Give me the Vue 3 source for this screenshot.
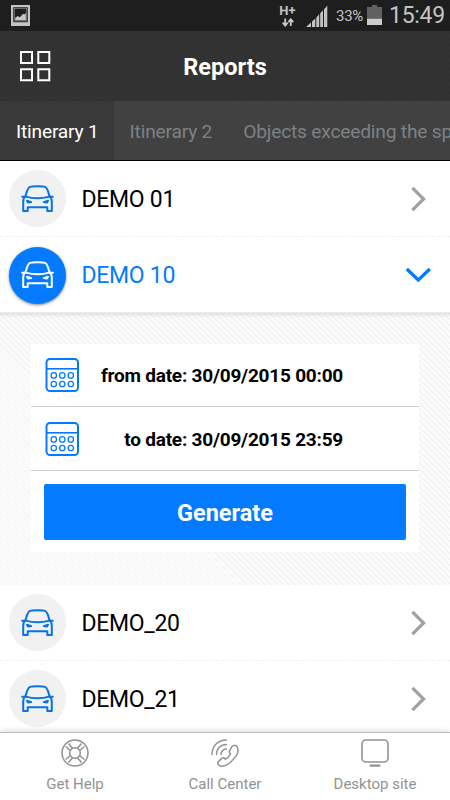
<script setup>
import { ref } from 'vue'

const tabs = ['Itinerary 1', 'Itinerary 2', 'Objects exceeding the speed']
const activeTab = ref(0)
const objects = ref([
  { name: 'DEMO 01', open: false },
  { name: 'DEMO 10', open: true },
  { name: 'DEMO_20', open: false },
  { name: 'DEMO_21', open: false },
])
const dates = [
  { label: 'from date:', value: '30/09/2015 00:00' },
  { label: 'to date:', value: '30/09/2015 23:59' },
]
</script>

<template>
  <div class="screen">
    <div class="status">
      <svg class="shot" width="20" height="22" viewBox="0 0 20 22">
        <rect x="0" y="0" width="19" height="21" fill="#c4c4c4" />
        <rect x="2.200" y="2.200" width="14.600" height="15" fill="#1d1d1d" />
        <rect x="3.300" y="3.300" width="12.400" height="12.600" fill="#1d1d1d" stroke="#8a8a8a" stroke-width="0.800" />
        <path d="M4.200 15.300v-2.600l2.600-1.800 2.200 1.300 3-3.400 1.300.8 1.600-1.600v7.300z" fill="#c4c4c4" />
      </svg>
      <div class="spacer"></div>
      <div class="net">
        <span class="hplus">H+</span>
        <svg width="12" height="9" viewBox="0 0 12 9">
          <path d="M3.200 0.500v6M0.700 4.600l2.500 2.900 2.500-2.900M8.800 8V1.500M6.300 4.200l2.500-2.900 2.500 2.900" fill="none" stroke="#c6c6c6" stroke-width="1.800" />
        </svg>
      </div>
      <svg class="signal" width="22" height="22" viewBox="0 0 22 22">
        <path d="M0 22L5 17.400V22zM6 16.500L9.300 13.400V22H6zM10.300 12.400L13.200 9.300V22h-2.900zM14.200 8.200L17 5.200V22h-2.800zM18 4.200L21.300 0.800V22H18z" fill="#c3c3c3" />
      </svg>
      <span class="percent">33%</span>
      <svg class="battery" width="15" height="20" viewBox="0 0 15 20">
        <path d="M5 0h5v2h5v12H0V2h5z" fill="#616161" />
        <path d="M0 13.800h15V20H0z" fill="#cbcbcb" />
      </svg>
      <span class="clock">15:49</span>
    </div>

    <header class="header">
      <svg class="grid" width="31" height="31" viewBox="0 0 31 31" fill="none" stroke="#fff" stroke-width="2">
        <path d="M1 1h11v11H1zM18.300 1h11v11h-11zM1 18.200h11v11H1zM18.300 18.200h11v11h-11z" />
      </svg>
      <h1 class="title">Reports</h1>
    </header>

    <nav class="tabs">
      <div v-for="(tab, i) in tabs" :key="tab" class="tab" :class="{ active: i === activeTab }" @click="activeTab = i">{{ tab }}</div>
    </nav>

    <main class="list">
      <template v-for="item in objects" :key="item.name">
        <div class="row" :class="{ open: item.open }" @click="item.open = !item.open">
          <div class="avatar">
            <svg width="33" height="28" viewBox="0 0 33 28" fill="none" stroke="currentColor" stroke-width="2" stroke-linejoin="round" stroke-linecap="round">
              <path d="M4.600 10.800C5.500 7 6.500 4.500 7.600 3 8.400 2 9.500 1.600 11 1.500c3.600-.4 7.400-.4 11 0 1.500.1 2.600.5 3.400 1.500 1.100 1.500 2.100 4 3 7.800" />
              <path d="M4.600 11.600C12 13.800 21 13.800 28.400 11.600" />
              <path d="M4.600 11.300C2.800 12.600 2.200 14.500 2.200 16.500V26H6.700V22.200H26.300V26H30.800V16.500c0-2-.6-3.900-2.400-5.200" />
              <path d="M1.200 11.800h2.400M31.800 11.800h-2.400" />
              <path d="M6 15.800l4.200 1.300-3.200.3zM27 15.800l-4.200 1.300 3.200.3z" />
            </svg>
          </div>
          <span class="name">{{ item.name }}</span>
          <svg v-if="item.open" class="chev" width="26" height="26" viewBox="0 0 26 26" fill="none" stroke="#047bff" stroke-width="3.200">
            <path d="M1.800 7L13.300 18 24.800 7" />
          </svg>
          <svg v-else class="chev" width="26" height="26" viewBox="0 0 26 26" fill="none" stroke="#a1a1a1" stroke-width="3.200">
            <path d="M7.400 1.800L18.600 13 7.400 24.200" />
          </svg>
        </div>

        <section v-if="item.open" class="panel">
          <div class="form">
            <div v-for="d in dates" :key="d.label" class="date">
              <svg class="cal" width="34" height="34" viewBox="0 0 34 34" fill="none" stroke="#047bff">
                <rect x="1.500" y="1" width="31.500" height="32" rx="3.500" stroke-width="2" />
                <path d="M1 10.800h32" stroke-width="1.600" />
                <g stroke-width="1.300">
                  <circle v-for="n in 6" :key="n" :cx="8.800 + ((n - 1) % 3) * 8.500" :cy="n > 3 ? 26 : 17.400" r="2.700" />
                </g>
              </svg>
              <span class="when">{{ d.label }} {{ d.value }}</span>
            </div>
            <button class="generate">Generate</button>
          </div>
        </section>
      </template>
    </main>

    <footer class="footer">
      <div class="action">
        <svg width="28" height="28" viewBox="0 0 28 28" fill="none" stroke="#929292" stroke-width="1.500">
          <circle cx="14" cy="14" r="13" />
          <circle cx="14" cy="14" r="5.300" />
          <path d="M9.300 11.500L4.600 7.500M11.500 9.300L7.500 4.600M18.700 11.500L23.400 7.500M16.500 9.300L20.500 4.600M9.300 16.500L4.600 20.500M11.500 18.700L7.500 23.400M18.700 16.500L23.400 20.500M16.500 18.700L20.500 23.400" />
        </svg>
        <span class="label">Get Help</span>
      </div>
      <div class="action">
        <svg width="28" height="28" viewBox="0 0 28 28" fill="none" stroke="#929292" stroke-width="1.500" stroke-linecap="round" stroke-linejoin="round">
          <path d="M1 15.500C1 7 7 1 15.500 1M5.500 15.500C5.500 9.500 9.500 5.500 15.500 5.500M10 15.500c0-3.200 2.300-5.500 5.500-5.500" />
          <path d="M20.600 8.200c1.500-2.400 4.500-2.400 5.600-.2 1.200 2.600 1 5.600-.9 8.600-2 2.900-4.500 5.700-7.300 7.900-2.600 2-5.600 3-8.500 2.500-2.900-.5-3.600-3-1.600-4.900l2.900-2.700c1.100-1 2.200-.9 3.300.8 2.300-.9 4.200-2.700 5.500-5.300-1.400-.9-1.700-1.800-.9-3.300z" />
        </svg>
        <span class="label">Call Center</span>
      </div>
      <div class="action">
        <svg width="28" height="28" viewBox="0 0 28 28" fill="none" stroke="#929292">
          <rect x="1" y="1" width="26" height="22" rx="4" stroke-width="1.600" />
          <path d="M9.500 26.600h9" stroke-width="2.200" stroke-linecap="round" />
        </svg>
        <span class="label">Desktop site</span>
      </div>
    </footer>
  </div>
</template>

<style>
body {
  margin: 0;
}
</style>

<style scoped>
* {
  box-sizing: border-box;
}
.screen {
  width: 450px;
  height: 800px;
  overflow: hidden;
  display: flex;
  flex-direction: column;
  background: #fff;
  font-family: Roboto, "Liberation Sans", sans-serif;
  color: #000;
}
.status {
  flex: none;
  height: 31px;
  background: #1e1e1e;
  display: flex;
  align-items: flex-start;
  padding: 5px 6px 0 11px;
  color: #c3c3c3;
}
.spacer {
  flex: 1;
}
.net {
  width: 17px;
  display: flex;
  flex-direction: column;
  align-items: center;
  margin-right: 10px;
}
.hplus {
  font-size: 13px;
  line-height: 12px;
  height: 13px;
  font-weight: 700;
}
.signal {
  margin-right: 8px;
}
.percent {
  width: 28px;
  font-size: 15px;
  line-height: 22px;
  letter-spacing: -0.3px;
  white-space: nowrap;
}
.battery {
  margin: 0 7px 0 3px;
}
.clock {
  width: 55px;
  font-size: 23px;
  line-height: 22px;
  letter-spacing: -0.3px;
  white-space: nowrap;
}
.header {
  flex: none;
  height: 70px;
  display: grid;
  grid-template-columns: 60px 1fr 60px;
  align-items: center;
  background: repeating-linear-gradient(45deg, #303030 0 1.400px, #333 1.400px 4.243px);
}
.grid {
  margin-left: 20px;
}
.title {
  margin: 0;
  padding-top: 2px;
  color: #fff;
  font-size: 23.500px;
  line-height: 30px;
  font-weight: 700;
  text-align: center;
}
.tabs {
  flex: none;
  height: 60px;
  display: flex;
  background: #414141;
  border-bottom: 1px solid #000;
  overflow: hidden;
}
.tab {
  flex: none;
  padding: 0 15px 0 16px;
  font-size: 19.200px;
  letter-spacing: -0.200px;
  line-height: 61px;
  color: #7c8285;
  white-space: nowrap;
}
.tab.active {
  background: #393939;
  color: #fff;
}
.list {
  flex: 1;
  min-height: 0;
  overflow: hidden;
}
.row {
  height: 76px;
  display: flex;
  align-items: center;
  padding: 0 19px 0 9px;
  border-bottom: 1px dashed #f1f1f1;
  background: #fff;
}
.row.open {
  padding-top: 1px;
  border-bottom: 1px solid #ebebeb;
  color: #047bff;
}
.avatar {
  width: 57px;
  height: 57px;
  border-radius: 50%;
  background: #f1f1f1;
  color: #0673e6;
  display: flex;
  align-items: center;
  justify-content: center;
}
.open .avatar {
  background: #047bff;
  color: #fff;
  box-shadow: 0 1px 3px rgba(0, 0, 0, 0.5);
}
.name {
  flex: 1;
  margin-left: 15.500px;
  padding-top: 3px;
  font-size: 23px;
  letter-spacing: -0.300px;
  line-height: 30px;
}
.open .name {
  padding-top: 2px;
}
.panel {
  height: 272px;
  padding: 31px 31px 33px;
  background:
    linear-gradient(rgba(0, 0, 0, 0.09), transparent 5px),
    repeating-linear-gradient(45deg, #f3f3f3 0 1.400px, #fbfbfb 1.400px 4.243px);
}
.form {
  height: 208px;
  background: #fff;
}
.date {
  height: 64px;
  border-bottom: 1px solid #d1d1d1;
  display: flex;
  align-items: center;
  padding: 0 76px 0 14px;
}
.date:first-child {
  height: 63px;
}
.when {
  flex: 1;
  padding-top: 1px;
  text-align: right;
  font-size: 19px;
  letter-spacing: -0.220px;
  font-weight: 700;
  white-space: nowrap;
}
.generate {
  display: block;
  width: 362px;
  height: 56px;
  margin: 13px 0 0 13px;
  padding: 2px 0 0;
  border: 0;
  border-radius: 2px;
  background: #047bff;
  color: #fff;
  font: 700 23.500px/54px Roboto, "Liberation Sans", sans-serif;
}
.footer {
  flex: none;
  height: 68px;
  border-top: 1px solid #bcbcbc;
  background: #fff;
  box-shadow: 0 -1px 6px rgba(0, 0, 0, 0.15);
  display: grid;
  grid-template-columns: repeat(3, 1fr);
  padding-top: 6px;
}
.action {
  display: flex;
  flex-direction: column;
  align-items: center;
}
.label {
  margin-top: 7px;
  font-size: 15px;
  line-height: 21px;
  color: #929292;
  white-space: nowrap;
}
</style>
